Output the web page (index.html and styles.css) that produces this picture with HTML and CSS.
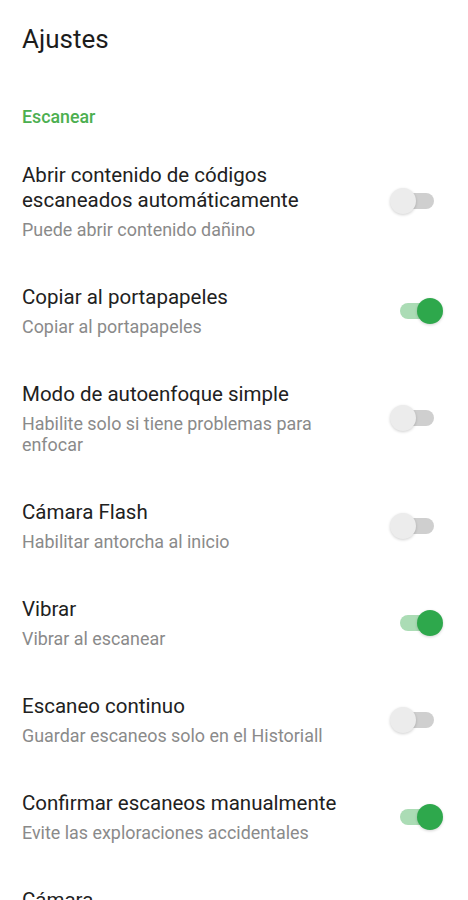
FILE: index.html
```html
<!DOCTYPE html>
<html lang="es">
<head>
<meta charset="utf-8">
<title>Ajustes</title>
<link rel="stylesheet" href="styles.css">
</head>
<body>
<header class="topbar"><h1 class="topbar-title">Ajustes</h1></header>
<main class="prefs">
  <h2 class="category">Escanear</h2>

  <div class="pref">
    <div class="pref-text">
      <div class="pref-title">Abrir contenido de códigos escaneados automáticamente</div>
      <div class="pref-summary">Puede abrir contenido dañino</div>
    </div>
    <div class="switch"><span class="track"></span><span class="thumb"></span></div>
  </div>

  <div class="pref">
    <div class="pref-text">
      <div class="pref-title">Copiar al portapapeles</div>
      <div class="pref-summary">Copiar al portapapeles</div>
    </div>
    <div class="switch on"><span class="track"></span><span class="thumb"></span></div>
  </div>

  <div class="pref">
    <div class="pref-text">
      <div class="pref-title">Modo de autoenfoque simple</div>
      <div class="pref-summary">Habilite solo si tiene problemas para enfocar</div>
    </div>
    <div class="switch"><span class="track"></span><span class="thumb"></span></div>
  </div>

  <div class="pref">
    <div class="pref-text">
      <div class="pref-title">Cámara Flash</div>
      <div class="pref-summary">Habilitar antorcha al inicio</div>
    </div>
    <div class="switch"><span class="track"></span><span class="thumb"></span></div>
  </div>

  <div class="pref">
    <div class="pref-text">
      <div class="pref-title">Vibrar</div>
      <div class="pref-summary">Vibrar al escanear</div>
    </div>
    <div class="switch on"><span class="track"></span><span class="thumb"></span></div>
  </div>

  <div class="pref">
    <div class="pref-text">
      <div class="pref-title">Escaneo continuo</div>
      <div class="pref-summary">Guardar escaneos solo en el Historiall</div>
    </div>
    <div class="switch"><span class="track"></span><span class="thumb"></span></div>
  </div>

  <div class="pref">
    <div class="pref-text">
      <div class="pref-title">Confirmar escaneos manualmente</div>
      <div class="pref-summary">Evite las exploraciones accidentales</div>
    </div>
    <div class="switch on"><span class="track"></span><span class="thumb"></span></div>
  </div>

  <div class="pref">
    <div class="pref-text">
      <div class="pref-title">Cámara</div>
    </div>
  </div>
</main>
</body>
</html>
```
FILE: styles.css
```css
* { box-sizing: border-box; }
html, body {
  margin: 0;
  padding: 0;
  background: #ffffff;
  font-family: Roboto, "Noto Sans", "Liberation Sans", sans-serif;
  color: #212121;
}
body { height: 900px; overflow: hidden; }

.topbar { padding: 24px 22px 0; }
.topbar-title {
  margin: 0;
  font-size: 26px;
  font-weight: 400;
  line-height: 30px;
  color: #1c1c1c;
}

.prefs { display: flex; flex-direction: column; }

.category {
  margin: 53px 0 13px;
  padding: 0 22px;
  font-size: 17.8px;
  font-weight: 500;
  line-height: 20px;
  color: #4caf50;
}

.pref {
  display: flex;
  align-items: center;
  padding: 22.5px 25px 22.5px 22px;
}
.pref-text { flex: 1; min-width: 0; }
.pref-title {
  font-size: 20.5px;
  line-height: 25px;
  color: #212121;
}
.pref-summary {
  margin-top: 6px;
  font-size: 17.9px;
  line-height: 21px;
  color: #8a8a8a;
}

.switch {
  position: relative;
  flex: none;
  width: 53px;
  height: 26px;
  margin-left: 30px;
}
.track {
  position: absolute;
  left: 10px;
  top: 5px;
  width: 34px;
  height: 16px;
  border-radius: 8px;
  background: #cfcfcf;
}
.thumb {
  position: absolute;
  left: 0;
  top: 0;
  width: 26px;
  height: 26px;
  border-radius: 50%;
  background: #ececec;
  box-shadow: 0 1px 3px rgba(0,0,0,0.18);
}
.switch.on .track { background: #abdcb5; }
.switch.on .thumb {
  left: 27px;
  background: #2ea84c;
}
```
